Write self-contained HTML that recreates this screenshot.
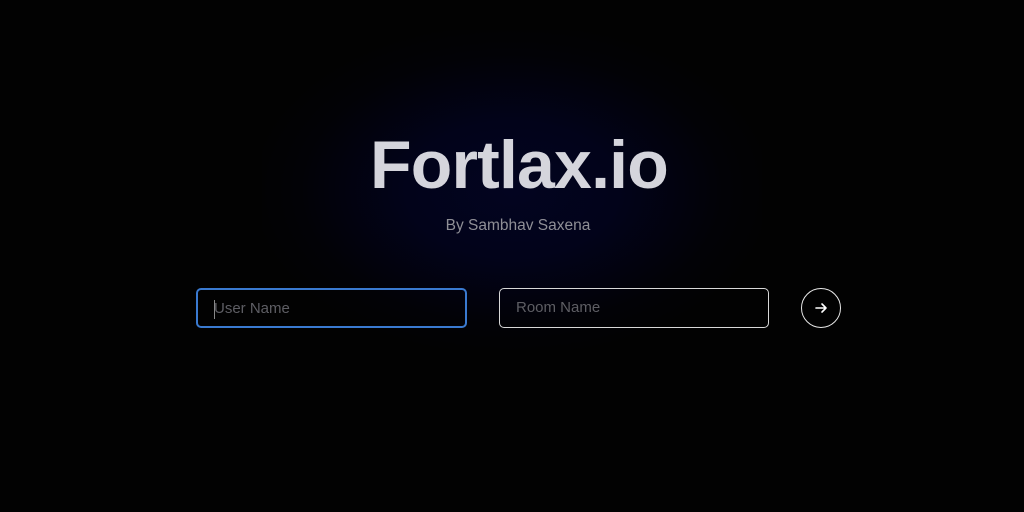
<!DOCTYPE html>
<html><head><style>
html,body{margin:0;width:1024px;height:512px;overflow:hidden;background:#020202;font-family:"Liberation Sans",sans-serif;}
.glow{position:absolute;left:262px;top:30px;width:500px;height:320px;background:radial-gradient(ellipse at center,#030420 0%,#02031a 30%,rgba(2,2,10,0.5) 60%,rgba(2,2,2,0) 75%);}
h1{position:absolute;left:7px;width:1024px;top:126px;margin:0;text-align:center;font-size:68px;font-weight:bold;color:#d5d5dc;letter-spacing:-0.8px;}
.by{position:absolute;left:6px;width:1024px;top:217px;text-align:center;font-size:15.5px;color:#8f8f96;}
.in{position:absolute;top:288px;height:40px;box-sizing:border-box;border-radius:5px;font-size:15px;color:#5e5e64;line-height:38px;padding-left:16px;}
.u{left:196px;width:271px;border:2px solid #3a7ad0;padding-left:16px;}
.r{left:499px;width:270px;border:1px solid #d8d8d8;}
.btn{position:absolute;left:801px;top:288px;width:40px;height:40px;box-sizing:border-box;border:1px solid #e8e8e8;border-radius:50%;}
.cur{position:absolute;left:16px;top:10px;width:1px;height:19px;background:#888;}
</style></head><body>
<div class="glow"></div>
<h1>Fortlax.io</h1>
<div class="by">By Sambhav Saxena</div>
<div class="in u"><span class="cur"></span>User Name</div>
<div class="in r">Room Name</div>
<div class="btn"><svg width="38" height="38" viewBox="0 0 38 38"><path d="M14 19h10M20 15l4 4-4 4" stroke="#fff" stroke-width="1.6" fill="none" stroke-linecap="round" stroke-linejoin="round"/></svg></div>
</body></html>
